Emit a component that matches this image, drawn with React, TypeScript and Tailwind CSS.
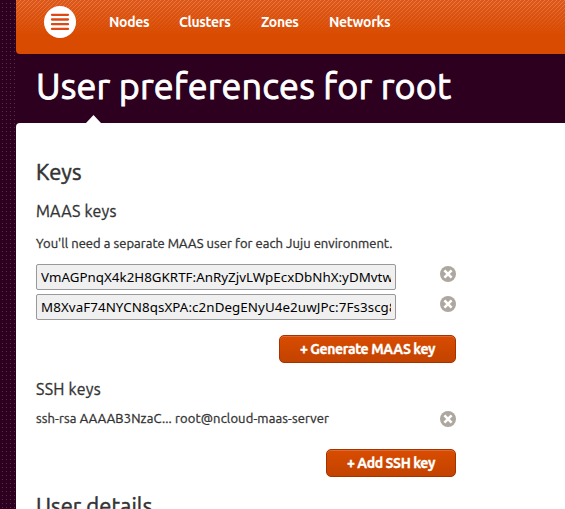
const navItems = [
  { label: "Nodes", box: "w-[70px] tracking-[-0.35px]" },
  { label: "Clusters", box: "w-[82px] tracking-[-0.35px]" },
  { label: "Zones", box: "w-[68px] tracking-[-0.4px]" },
  { label: "Networks", box: "w-[80px] tracking-[-0.35px]" },
];

const maasKeys = [
  { value: "VmAGPnqX4k2H8GKRTF:AnRyZjvLWpEcxDbNhX:yDMvtw", tracking: "tracking-[0.03px]" },
  { value: "M8XvaF74NYCN8qsXPA:c2nDegENyU4e2uwJPc:7Fs3scg8", tracking: "tracking-[0.09px]" },
];

function Logo() {
  return (
    <svg width="32" height="32" viewBox="0 0 32 32" aria-hidden="true">
      <circle cx="16" cy="16" r="16" fill="#fff" />
      <path d="M8 8.8h16M8 13.5h16M8 18.2h16M8 22.9h16" stroke="#dd4814" strokeWidth="2.3" strokeLinecap="round" />
    </svg>
  );
}

function DeleteButton() {
  return (
    <button type="button" aria-label="Delete" className="block h-4 w-4 shrink-0">
      <svg width="16" height="16" viewBox="0 0 16 16">
        <circle cx="8" cy="8" r="8" fill="#aea79f" />
        <path d="M4.4 4.4l7.2 7.2M11.6 4.4l-7.2 7.2" stroke="#fff" strokeWidth="2.6" />
      </svg>
    </button>
  );
}

function ActionButton({ label, className }: { label: string; className: string }) {
  return (
    <button
      type="button"
      className={`flex h-7 items-center justify-center whitespace-nowrap rounded-[5px] border border-[#a53300] bg-linear-to-b from-[#d94c00] to-[#c24300] text-[14px] font-semibold leading-none text-white shadow-[inset_0_1px_0_#e06a35] ${className}`}
    >
      {label}
    </button>
  );
}

export default function App() {
  return (
    <div className="flex h-[509px] w-[565px] overflow-hidden bg-[#2c001e] font-['Ubuntu','Noto_Sans',sans-serif] text-[#333]">
      <div className="w-4 shrink-0 bg-[radial-gradient(circle_at_2.5px_3.5px,#563048_0.5px,transparent_0.8px)] bg-[length:4px_4px]" />
      <div className="flex w-[549px] flex-col">
        <header className="relative flex h-[54px] shrink-0 rounded-bl-[4px] bg-[#d94b00]">
          <div className="absolute inset-x-0 top-0 h-9 bg-[repeating-linear-gradient(135deg,#e8783f_0px,#e8783f_1px,#dc571a_1px,#dc571a_2.83px)] mask-b-from-10% mask-b-to-100%" />
          <div className="relative ml-7 mt-1.5 h-8 w-8">
            <Logo />
          </div>
          <nav className="relative ml-[33px] mt-[13px] flex text-[14px] font-semibold leading-[18px] text-white">
            {navItems.map((item) => (
              <a key={item.label} className={`whitespace-nowrap ${item.box}`}>
                {item.label}
              </a>
            ))}
          </nav>
        </header>
        <div className="relative h-[69px] shrink-0 pl-5 pt-[8px]">
          <h1 className="whitespace-nowrap text-[36px] leading-[48px] tracking-[0.17px] text-white [-webkit-text-stroke:0.9px_white]">User preferences for root</h1>
          <svg className="absolute bottom-0 left-[70px]" width="16" height="8" viewBox="0 0 16 8" aria-hidden="true">
            <path d="M0 8L7.5 0L15 8Z" fill="#fff" />
          </svg>
        </div>
        <main className="h-[386px] shrink-0 overflow-hidden whitespace-nowrap rounded-tl-[4px] bg-white pl-5 [-webkit-text-stroke:0.3px]">
          <h2 className="pt-[35px] text-[22px] leading-[28px] tracking-[0.05px] [-webkit-text-stroke:0.5px]">Keys</h2>
          <h3 className="mt-[15px] text-[16px] leading-[20px] tracking-[0.2px]">MAAS keys</h3>
          <p className="mt-[13px] text-[13px] leading-[18px] tracking-[0.04px]">You'll need a separate MAAS user for each Juju environment.</p>
          <div className="mt-[12px] flex w-[420px] flex-col gap-1">
            {maasKeys.map((key) => (
              <div key={key.value} className="flex h-[26px] justify-between">
                <div className="h-[26px] w-[360px] rounded-[2px] border border-[#999] bg-[#f0f0f0] px-1 font-['Noto_Sans',sans-serif] text-[13.33px] leading-[25px] text-black [-webkit-text-stroke:0]">
                  <div className={`overflow-hidden ${key.tracking}`}>{key.value}</div>
                </div>
                <div className="pt-[2px]">
                  <DeleteButton />
                </div>
              </div>
            ))}
          </div>
          <div className="mt-[15px] flex w-[420px] justify-end">
            <ActionButton label="+ Generate MAAS key" className="w-[177px] tracking-[-0.4px]" />
          </div>
          <h3 className="mt-[16px] text-[16px] leading-[20px] tracking-[0.25px]">SSH keys</h3>
          <div className="mt-[10px] flex w-[420px] items-center justify-between text-[13px] leading-[20px]">
            <span className="relative -top-px tracking-[0.13px]">ssh-rsa AAAAB3NzaC... root@ncloud-maas-server</span>
            <DeleteButton />
          </div>
          <div className="mt-[20px] flex w-[420px] justify-end">
            <ActionButton label="+ Add SSH key" className="w-[130px] tracking-[-0.4px]" />
          </div>
          <h2 className="mt-[15px] text-[22px] leading-[28px] tracking-[0.05px] [-webkit-text-stroke:0.5px]">User details</h2>
        </main>
      </div>
    </div>
  );
}
